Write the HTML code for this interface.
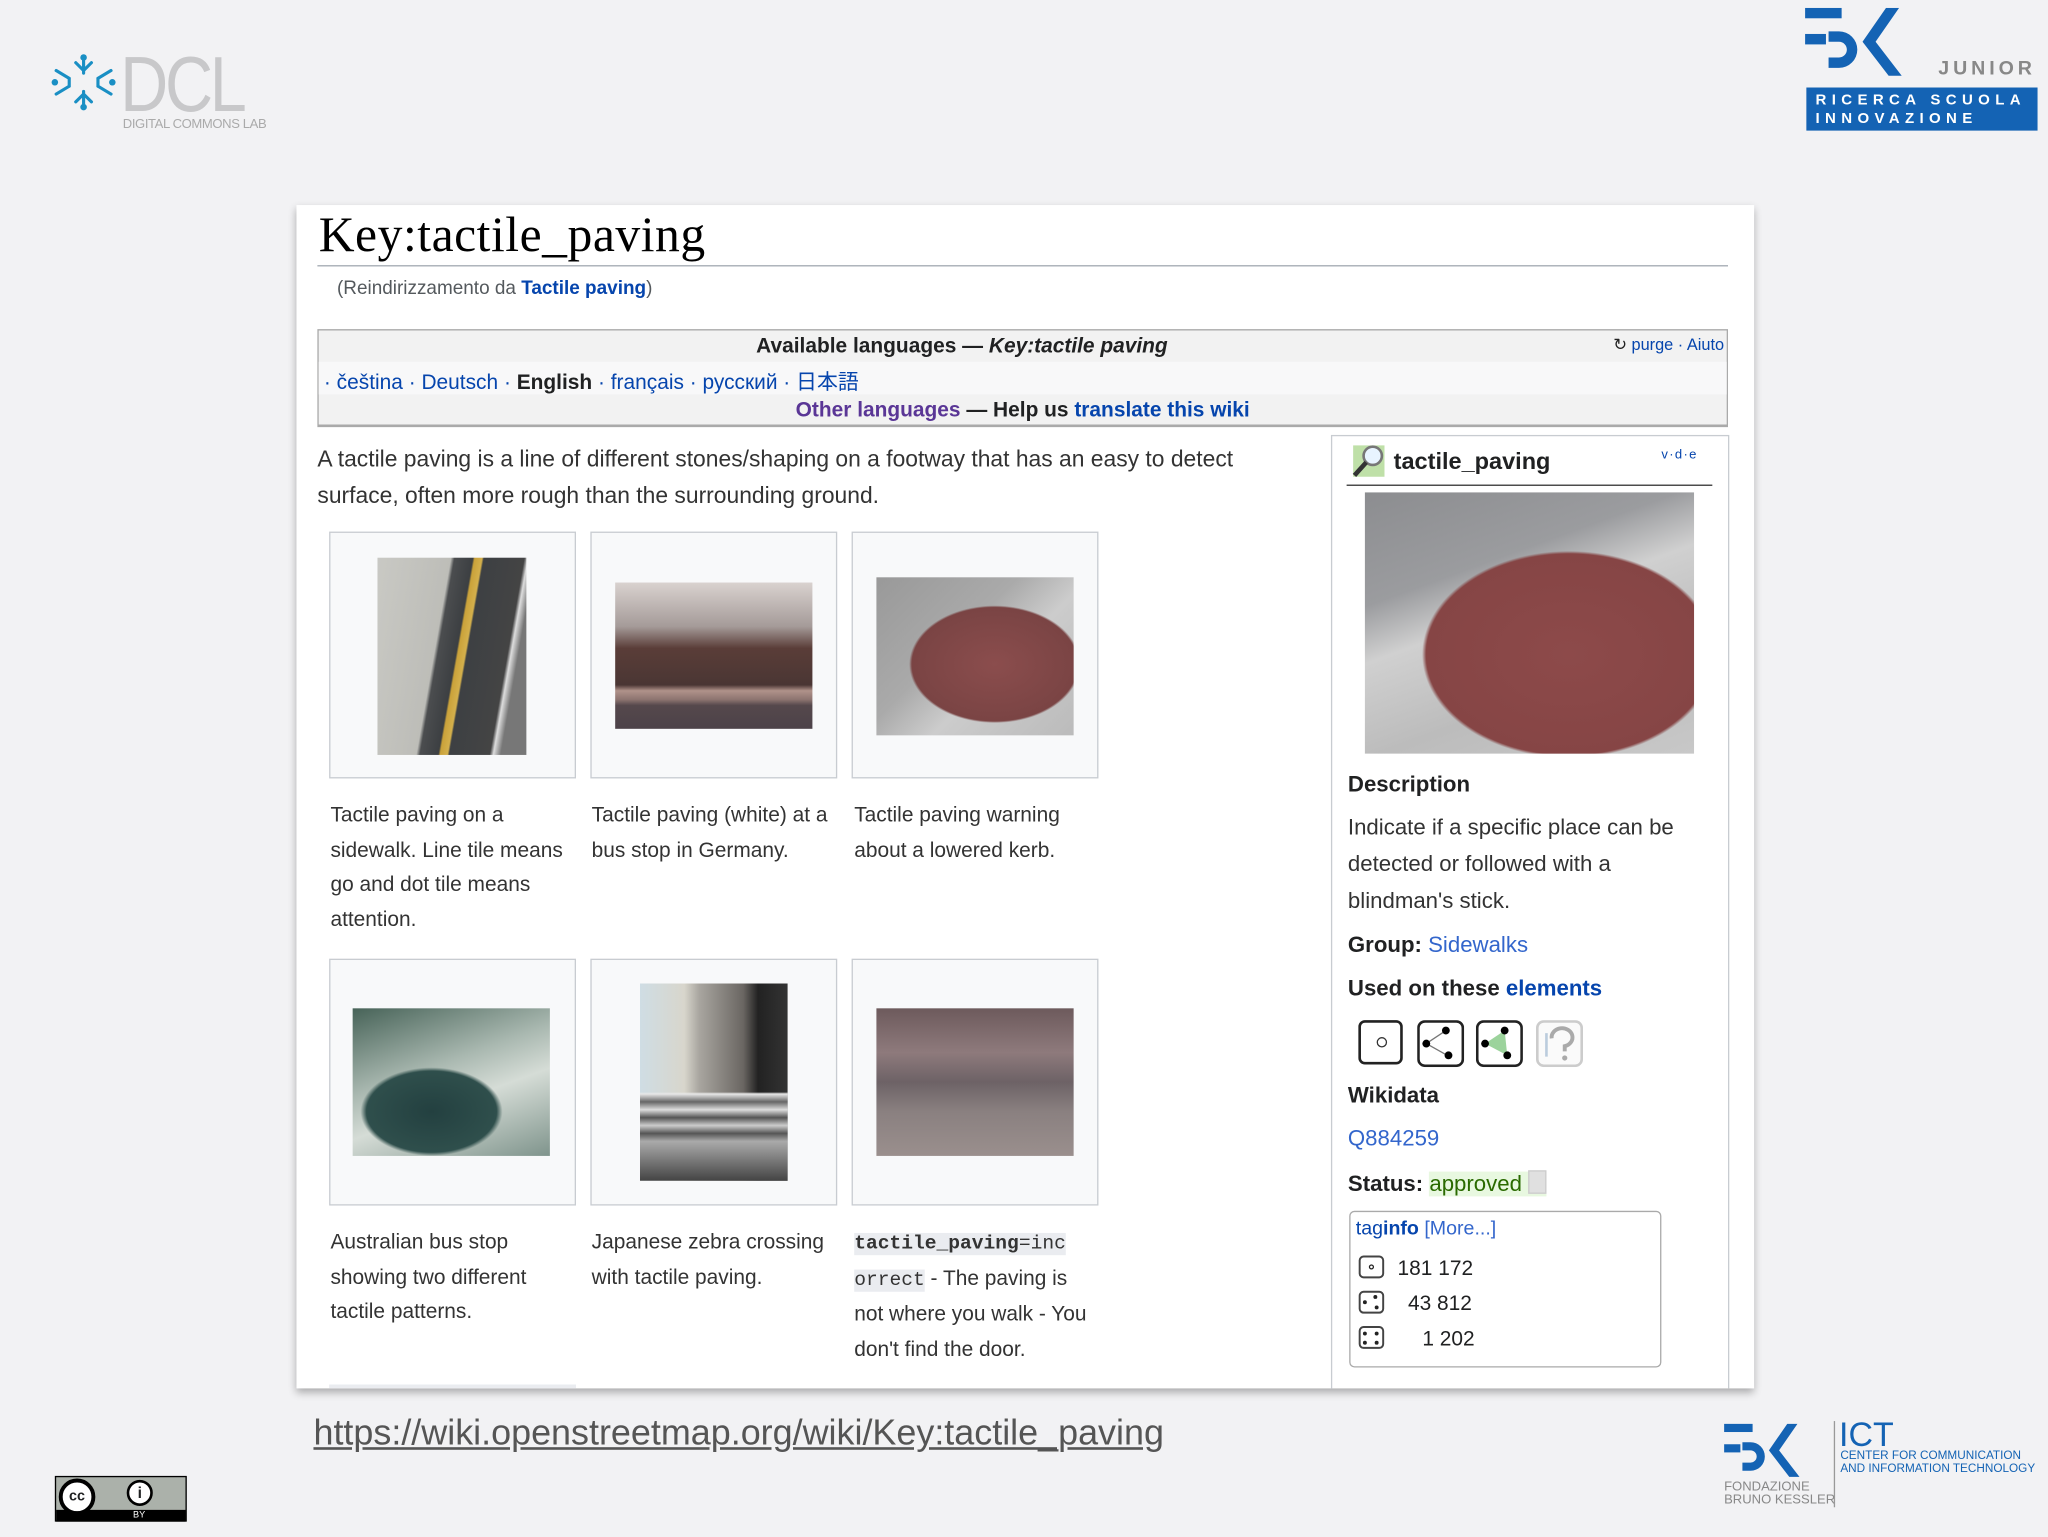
<!DOCTYPE html>
<html><head><meta charset="utf-8"><style>
html,body{margin:0;padding:0;background:#f2f2f4;width:2048px;height:1537px;overflow:hidden}
#w{position:absolute;left:0;top:0;width:1568px;height:1177px;transform:scale(1.30612);transform-origin:0 0;font-family:"Liberation Sans","Noto Sans CJK JP",sans-serif;color:#202122}
.a{position:absolute;white-space:nowrap}
a,.l{color:#0645ad;text-decoration:none}
.card{position:absolute;left:227px;top:157px;width:1116px;height:906px;background:#fff;box-shadow:0 3px 6px rgba(0,0,0,.3);overflow:hidden}
.box{position:absolute;width:189px;height:189px;background:#f8f9fa;border:1px solid #c8ccd1;box-sizing:border-box}
.cap{position:absolute;font-size:16px;line-height:26.5px;color:#333;width:186px}
.img{position:absolute}
code{font-family:"Liberation Mono",monospace;background:#eaecf0;font-size:15px;color:#333}
.ib{font-size:17px;color:#333}
.ico{position:absolute;width:34px;height:34px;border:2px solid #222;border-radius:5px;box-sizing:border-box;background:#fff}
</style></head><body><div id="w">

<svg class="a" style="left:38px;top:40px" width="52" height="46" viewBox="0 0 52 46">
<g stroke="#1a8fc4" stroke-width="2.4" fill="none" stroke-linecap="round">
<path d="M26 4v12M20 8l6 6 6-6M26 42V30M20 38l6-6 6 6M5 14l10 6M5 32l10-6M47 14l-10 6M47 32l-10-6M15 20v6M37 20v6"/></g>
<g fill="#1a8fc4"><circle cx="26" cy="4" r="2.5"/><circle cx="26" cy="42" r="2.5"/><circle cx="4" cy="23" r="2.5"/><circle cx="48" cy="23" r="2.5"/></g></svg>
<div class="a" style="left:92px;top:30px;font-size:60px;color:#c8c8ca;letter-spacing:-3px;transform:scaleX(.85);transform-origin:0 0">DCL</div>
<div class="a" style="left:94px;top:90px;font-size:10px;color:#aaa;letter-spacing:-.3px">DIGITAL COMMONS LAB</div>

<svg class="a" style="left:1382px;top:6px" width="100" height="56" viewBox="0 0 100 56">
<g fill="#1463b4"><rect x="0" y="0" width="28" height="8"/><rect x="0" y="20" width="16" height="8"/><path d="M18 20h8a14 14 0 0 1 0 28h-8v-8h8a6 6 0 0 0 0-12h-8z" transform="translate(0,-2)"/><path d="M62 0h10L54 26l20 26h-10L44 26z"/></g></svg>
<div class="a" style="left:1484px;top:44px;font-size:15px;font-weight:bold;letter-spacing:3px;color:#888">JUNIOR</div>
<div class="a" style="left:1383px;top:67px;width:177px;height:33px;background:#1463b4;color:#fff;font-size:11.5px;font-weight:bold;letter-spacing:4.1px;line-height:14px;padding:3px 0 0 7px;box-sizing:border-box;overflow:hidden">RICERCA SCUOLA<br>INNOVAZIONE</div>

<div class="card">
<div class="a" style="left:17px;top:1px;font-family:'Liberation Serif',serif;font-size:38px;letter-spacing:.4px;color:#000">Key:tactile_paving</div>
<div class="a" style="left:16px;top:46px;width:1080px;height:1px;background:#a2a9b1"></div>
<div class="a" style="left:31px;top:56px;font-size:14.5px;color:#54595d">(Reindirizzamento da <b class="l">Tactile paving</b>)</div>

<div class="a" style="left:16px;top:95px;width:1080px;height:75px;background:#f2f2f2;border:1px solid #aaa;border-bottom:2px solid #aaa;box-sizing:border-box">
 <div class="a" style="left:0;top:24px;width:1078px;height:25px;background:#f8f8f9"></div>
 <div class="a" style="left:0;top:4px;width:985px;text-align:center;font-size:16px;font-weight:bold">Available languages — <i>Key:tactile paving</i></div>
 <div class="a" style="right:2px;top:3px;font-size:12.5px;color:#0645ad"><span style="color:#222">↻</span> purge · Aiuto</div>
 <div class="a" style="left:4px;top:26px;font-size:16px;color:#0645ad">· čeština · Deutsch · <b style="color:#202122">English</b> · français · русский · 日本語</div>
 <div class="a" style="left:0;top:53px;width:1078px;text-align:center;font-size:16px;font-weight:bold"><span style="color:#5a3696">Other languages</span> — Help us <span class="l">translate this wiki</span></div>
</div>

<div class="a" style="left:16px;top:180px;font-size:17.5px;line-height:28px;color:#333;white-space:normal;width:740px">A tactile paving is a line of different stones/shaping on a footway that has an easy to detect surface, often more rough than the surrounding ground.</div>

<div class="box" style="left:25px;top:250px"></div>
<div class="box" style="left:225px;top:250px"></div>
<div class="box" style="left:425px;top:250px"></div>
<div class="box" style="left:25px;top:577px"></div>
<div class="box" style="left:225px;top:577px"></div>
<div class="box" style="left:425px;top:577px"></div>

<div class="img" style="left:62px;top:270px;width:114px;height:151px;background:linear-gradient(100deg,#c9c9c4 0,#bdbdb8 40%,#4b4d4f 42%,#3c3f42 52%,#caa23a 53%,#d4b04c 57%,#3d4043 58%,#444 80%,#ddd 82%,#777 86%)"></div>
<div class="img" style="left:244px;top:289px;width:151px;height:112px;background:linear-gradient(180deg,#d9d2cf 0,#a59b99 30%,#5a3d38 45%,#4a3634 70%,#b0928a 74%,#8d7470 80%,#55484c 84%,#4c4248 100%)"></div>
<div class="img" style="left:444px;top:285px;width:151px;height:121px;background:radial-gradient(ellipse 70% 60% at 60% 55%,#8b4d4d 0,#7a4444 60%,transparent 62%),linear-gradient(135deg,#999 0,#aaa 40%,#ccc 60%,#bbb 100%)"></div>
<div class="img" style="left:43px;top:615px;width:151px;height:113px;background:radial-gradient(ellipse 60% 50% at 40% 70%,#234040 0,#2f4f4c 55%,transparent 60%),linear-gradient(160deg,#476358 0,#a9b8b0 40%,#d5dcd6 60%,#7f948c 100%)"></div>
<div class="img" style="left:263px;top:596px;width:113px;height:151px;background:linear-gradient(180deg,transparent 0,transparent 55%,#e8e8e8 56%,#666 60%,#ddd 64%,#555 68%,#ccc 72%,#555 76%,#aaa 80%,#444 100%),linear-gradient(90deg,#cfdde4 0,#d8d6cc 30%,#a9a6a0 40%,#6a6662 70%,#222 80%,#333 100%)"></div>
<div class="img" style="left:444px;top:615px;width:151px;height:113px;background:linear-gradient(180deg,#6d5a5c 0,#8e7a7c 30%,#6d6266 50%,#8a8080 70%,#9a8f8d 100%)"></div>

<div class="cap" style="left:26px;top:455px">Tactile paving on a sidewalk. Line tile means go and dot tile means attention.</div>
<div class="cap" style="left:226px;top:455px;width:182px">Tactile paving (white) at a bus stop in Germany.</div>
<div class="cap" style="left:427px;top:455px">Tactile paving warning about a lowered kerb.</div>
<div class="cap" style="left:26px;top:782px">Australian bus stop showing two different tactile patterns.</div>
<div class="cap" style="left:226px;top:782px">Japanese zebra crossing with tactile paving.</div>
<div class="cap" style="left:427px;top:782px;width:186px"><code><b>tactile_paving</b>=inc</code><br><code>orrect</code> - The paving is not where you walk - You don't find the door.</div>
<div class="a" style="left:25px;top:903px;width:189px;height:3px;background:#eaecf0"></div>

<div class="a" style="left:792px;top:176px;width:305px;height:740px;border:1px solid #c8ccd1;box-sizing:border-box"></div>
<svg class="a" style="left:807px;top:182px" width="28" height="28" viewBox="0 0 28 28"><rect x="2" y="2" width="24" height="24" fill="#bfe0a8"/><circle cx="17" cy="10" r="7" fill="#e8f4ff" stroke="#777" stroke-width="2"/><path d="M12 15L3 25" stroke="#333" stroke-width="3.5"/></svg>
<div class="a" style="left:840px;top:186px;font-size:18px;font-weight:bold">tactile_paving</div>
<div class="a" style="left:1045px;top:186px;font-size:10px;color:#0645ad;letter-spacing:1px">v·d·e</div>
<div class="a" style="left:804px;top:214px;width:280px;height:1px;background:#333"></div>
<div class="img" style="left:818px;top:220px;width:252px;height:200px;background:radial-gradient(ellipse 62% 55% at 62% 62%,#8d4a4a 0,#864545 70%,transparent 72%),linear-gradient(160deg,#8c8d90 0,#9b9c9f 30%,#d0d0d0 45%,#bcbcbc 70%,#c8c8c8 100%)"></div>
<div class="a" style="left:805px;top:434px;font-size:17px;font-weight:bold">Description</div>
<div class="a ib" style="left:805px;top:463px;line-height:28px;white-space:normal;width:280px">Indicate if a specific place can be detected or followed with a blindman's stick.</div>
<div class="a ib" style="left:805px;top:557px"><b style="color:#202122">Group:</b> <span class="l" style="color:#3366cc">Sidewalks</span></div>
<div class="a ib" style="left:805px;top:590px;font-weight:bold;color:#202122">Used on these <span class="l">elements</span></div>
<div class="ico" style="left:813px;top:624px"><div class="a" style="left:12px;top:11px;width:6px;height:6px;border:1.5px solid #333;border-radius:50%"></div></div>
<svg class="a" style="left:858px;top:624px" width="36" height="36"><rect x="1" y="1" width="34" height="34" rx="5" fill="#fff" stroke="#222" stroke-width="2"/><path d="M7 18L22 8M7 18L23 27" stroke="#777"/><circle cx="7" cy="18" r="3"/><circle cx="22" cy="8" r="3"/><circle cx="24" cy="27" r="3"/></svg>
<svg class="a" style="left:903px;top:624px" width="36" height="36"><rect x="1" y="1" width="34" height="34" rx="5" fill="#fff" stroke="#222" stroke-width="2"/><path d="M7 18L22 8L24 27Z" fill="#9cd39c"/><circle cx="7" cy="18" r="3"/><circle cx="22" cy="8" r="3"/><circle cx="24" cy="27" r="3"/></svg>
<svg class="a" style="left:949px;top:624px" width="36" height="36"><rect x="1" y="1" width="34" height="34" rx="5" fill="#fafafa" stroke="#ccc" stroke-width="2"/><path d="M12 14a8 7 0 1 1 10 6v4" stroke="#aaa" stroke-width="3" fill="none"/><circle cx="22" cy="29" r="2" fill="#aaa"/><path d="M8 10v18" stroke="#bcd" stroke-width="2"/></svg>
<div class="a" style="left:805px;top:672px;font-size:17px;font-weight:bold">Wikidata</div>
<div class="a ib" style="left:805px;top:705px;color:#3366cc">Q884259</div>
<div class="a ib" style="left:805px;top:739px"><b style="color:#202122">Status:</b> <span style="background:#e8f8e0;color:#2a6a00">approved <span style="display:inline-block;width:12px;height:16px;background:#e0e0e0;border:1px solid #ccc;vertical-align:-2px"></span></span></div>
<div class="a" style="left:806px;top:770px;width:239px;height:120px;border:1px solid #aaa;border-radius:4px;box-sizing:border-box"></div>
<div class="a" style="left:811px;top:775px;font-size:15px;color:#0645ad">tag<b>info</b> <span style="color:#3366cc">[More...]</span></div>
<svg class="a" style="left:813px;top:804px" width="20" height="72"><g fill="none" stroke="#444" stroke-width="1.5"><rect x="1" y="1" width="18" height="16" rx="3"/><rect x="1" y="28" width="18" height="16" rx="3"/><rect x="1" y="55" width="18" height="16" rx="3"/></g><g fill="#222"><circle cx="10" cy="9" r="1.5" fill="none" stroke="#222"/><circle cx="5" cy="36" r="1.5"/><circle cx="13" cy="32" r="1.5"/><circle cx="14" cy="40" r="1.5"/><circle cx="5" cy="60" r="1.5"/><circle cx="14" cy="60" r="1.5"/><circle cx="5" cy="67" r="1.5"/><circle cx="14" cy="67" r="1.5"/></g></svg>
<div class="a" style="left:843px;top:806px;font-size:16px">181 172</div>
<div class="a" style="left:851px;top:833px;font-size:16px">43 812</div>
<div class="a" style="left:862px;top:860px;font-size:16px">1 202</div>
</div>

<div class="a" style="left:240px;top:1081px;font-size:27.5px;color:#555;text-decoration:underline">https://wiki.openstreetmap.org/wiki/Key:tactile_paving</div>

<div class="a" style="left:42px;top:1130px;width:101px;height:35px;background:#abb1aa;border:1px solid #000;box-sizing:border-box">
 <div class="a" style="left:0;top:25px;width:99px;height:9px;background:#000;color:#fff;font-size:7px;text-align:center;line-height:9px;padding-left:28px;box-sizing:border-box">BY</div>
 <div class="a" style="left:2px;top:1px;width:28px;height:28px;border-radius:50%;background:#fff;border:3px solid #000;box-sizing:border-box;font-size:11px;font-weight:bold;text-align:center;line-height:22px">cc</div>
 <div class="a" style="left:54px;top:2px;width:20px;height:20px;border-radius:50%;background:#fff;border:2px solid #000;box-sizing:border-box;font-size:12px;font-weight:bold;text-align:center;line-height:17px">i</div>
</div>

<svg class="a" style="left:1320px;top:1088px" width="78" height="48" viewBox="0 0 100 56">
<g fill="#1463b4"><rect x="0" y="0" width="28" height="8"/><rect x="0" y="20" width="16" height="8"/><path d="M18 18h8a14 14 0 0 1 0 28h-8v-8h8a6 6 0 0 0 0-12h-8z"/><path d="M62 0h10L54 26l20 26h-10L44 26z"/></g></svg>
<div class="a" style="left:1320px;top:1134px;font-size:10px;line-height:10px;color:#888">FONDAZIONE<br>BRUNO KESSLER</div>
<div class="a" style="left:1404px;top:1088px;width:1px;height:66px;background:#999"></div>
<div class="a" style="left:1408px;top:1083px;font-size:26px;color:#1463b4">ICT</div>
<div class="a" style="left:1409px;top:1110px;font-size:9px;line-height:9.5px;color:#1463b4">CENTER FOR COMMUNICATION<br>AND INFORMATION TECHNOLOGY</div>

</div></body></html>
